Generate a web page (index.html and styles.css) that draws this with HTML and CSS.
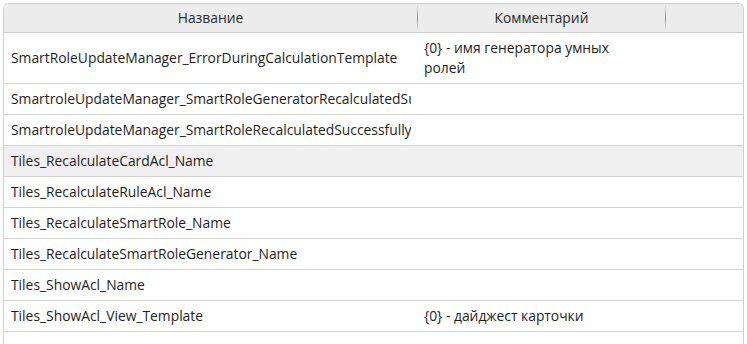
FILE: index.html
```html
<!DOCTYPE html>
<html lang="ru">
<head>
<meta charset="utf-8">
<link rel="stylesheet" href="styles.css">
</head>
<body>
<div class="grid">
  <div class="row head">
    <div class="hcell">Название</div>
    <div class="hcell">Комментарий</div>
    <div class="hcell"></div>
  </div>
  <div class="row">
    <div class="cell">SmartRoleUpdateManager_ErrorDuringCalculationTemplate</div>
    <div class="cell wrap">{0} - имя генератора умных ролей</div>
    <div class="cell"></div>
  </div>
  <div class="row">
    <div class="cell">SmartroleUpdateManager_SmartRoleGeneratorRecalculatedSuccessfully</div>
    <div class="cell"></div>
    <div class="cell"></div>
  </div>
  <div class="row">
    <div class="cell">SmartroleUpdateManager_SmartRoleRecalculatedSuccessfully</div>
    <div class="cell"></div>
    <div class="cell"></div>
  </div>
  <div class="row selected">
    <div class="cell">Tiles_RecalculateCardAcl_Name</div>
    <div class="cell"></div>
    <div class="cell"></div>
  </div>
  <div class="row">
    <div class="cell">Tiles_RecalculateRuleAcl_Name</div>
    <div class="cell"></div>
    <div class="cell"></div>
  </div>
  <div class="row">
    <div class="cell">Tiles_RecalculateSmartRole_Name</div>
    <div class="cell"></div>
    <div class="cell"></div>
  </div>
  <div class="row">
    <div class="cell">Tiles_RecalculateSmartRoleGenerator_Name</div>
    <div class="cell"></div>
    <div class="cell"></div>
  </div>
  <div class="row">
    <div class="cell">Tiles_ShowAcl_Name</div>
    <div class="cell"></div>
    <div class="cell"></div>
  </div>
  <div class="row">
    <div class="cell">Tiles_ShowAcl_View_Template</div>
    <div class="cell">{0} - дайджест карточки</div>
    <div class="cell"></div>
  </div>
  <div class="row last">
    <div class="cell">&nbsp;</div>
    <div class="cell"></div>
    <div class="cell"></div>
  </div>
</div>
</body>
</html>
```
FILE: styles.css
```css
html, body {
  margin: 0;
  padding: 0;
  background: #ffffff;
  overflow: hidden;
  height: 344px;
}
body {
  padding: 3px 3px 0 3px;
  font-family: "Open Sans", "Noto Sans", sans-serif;
  font-size: 13.85px;
  color: #1e1e1e;
}
.grid {
  width: 739px;
  border: 1px solid #cfcfcf;
  border-bottom: none;
  border-radius: 6px 6px 0 0;
  overflow: hidden;
}
.row {
  display: grid;
  grid-template-columns: 413px 249px 77px;
  align-items: center;
  border-bottom: 1px solid #d4d4d4;
}
.head {
  background: #ececec;
  height: 28px;
  border-bottom-color: #cfcfcf;
}
.hcell {
  position: relative;
  text-align: center;
  line-height: 28px;
  height: 28px;
  color: #2b2b2b;
}
.hcell::after {
  content: "";
  position: absolute;
  right: 0;
  top: 2px;
  bottom: 2px;
  width: 1px;
  background: linear-gradient(to bottom, rgba(120,120,120,0.1), #8a8a8a 50%, rgba(120,120,120,0.1));
}
.hcell:first-child::after {
  right: -1px;
}
.hcell:last-child::after {
  display: none;
}
.cell {
  padding: 5px 7px;
  line-height: 20px;
  white-space: nowrap;
  overflow: hidden;
  clip-path: inset(0 6px 0 0);
}
.cell.wrap {
  white-space: normal;
  padding-right: 40px;
}
.selected {
  background: #f0f0f0;
}
.last {
  height: 40px;
  border-bottom: none;
  align-items: start;
}
```
